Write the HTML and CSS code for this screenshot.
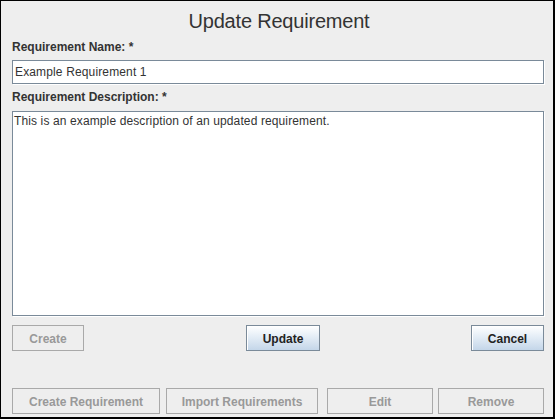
FILE: index.html
```html
<!DOCTYPE html>
<html>
<head>
<meta charset="utf-8">
<link rel="stylesheet" href="styles.css">
</head>
<body>
<div class="window">
  <div class="title">Update Requirement</div>
  <div class="label label-name">Requirement Name: *</div>
  <div class="field">Example Requirement 1</div>
  <div class="label label-desc">Requirement Description: *</div>
  <div class="area">This is an example description of an updated requirement.</div>
  <div class="row actions">
    <button class="btn disabled btn-create">Create</button>
    <button class="btn enabled btn-update">Update</button>
    <button class="btn enabled btn-cancel">Cancel</button>
  </div>
  <div class="row bottom">
    <button class="btn disabled b-create">Create Requirement</button>
    <button class="btn disabled b-import">Import Requirements</button>
    <button class="btn disabled b-edit">Edit</button>
    <button class="btn disabled b-remove">Remove</button>
  </div>
</div>
</body>
</html>
```
FILE: styles.css
```css
html, body {
  margin: 0;
  padding: 0;
  background: #eeeeee;
}
.window {
  width: 555px;
  height: 419px;
  box-sizing: border-box;
  border-top: 1px solid #000;
  border-left: 1px solid #000;
  border-right: 2px solid #000;
  border-bottom: 2px solid #000;
  background: #eeeeee;
  padding: 8px 9px 0 11px;
  font-family: "Liberation Sans", Arial, sans-serif;
  color: #333333;
  display: flex;
  flex-direction: column;
}
.title {
  font-size: 20px;
  line-height: 24px;
  text-align: center;
  letter-spacing: -0.2px;
  margin-left: 2px;
}
.label {
  font-size: 12px;
  font-weight: bold;
  line-height: 15px;
}
.label-name {
  margin-top: 7px;
}
.label-desc {
  margin-top: 6px;
}
.field {
  margin-top: 5px;
  height: 24px;
  box-sizing: border-box;
  border: 1px solid #7a8a99;
  box-shadow: 1px 1px 0 #ffffff;
  background: #ffffff;
  font-size: 12px;
  line-height: 16px;
  letter-spacing: 0.14px;
  padding: 3px 2px;
  color: #333333;
}
.area {
  margin-top: 6px;
  height: 205px;
  box-sizing: border-box;
  border: 1px solid #7a8a99;
  box-shadow: 1px 1px 0 #ffffff;
  background: #ffffff;
  font-size: 12px;
  line-height: 16px;
  letter-spacing: 0.12px;
  padding: 1px 1px;
  color: #333333;
}
.row {
  display: flex;
}
.actions {
  margin-top: 9px;
  justify-content: space-between;
}
.bottom {
  margin-top: 37px;
}
.btn {
  height: 26px;
  box-sizing: border-box;
  padding: 1px 0 0 0;
  margin: 0;
  font-family: "Liberation Sans", Arial, sans-serif;
  font-size: 12px;
  font-weight: bold;
  text-align: center;
  border-radius: 0;
}
.enabled {
  border: 1px solid #7a8a99;
  color: #222222;
  background: linear-gradient(#ffffff 0%, #e4edf6 45%, #c4d6e9 100%);
  box-shadow: inset 1px 1px 0 #ffffff;
}
.disabled {
  border: 1px solid #a9a9a9;
  color: #999999;
  background: #eeeeee;
}
.btn-create { width: 72px; }
.btn-update { width: 74px; margin-left: 11px; }
.btn-cancel { width: 73px; }
.b-create { width: 148px; }
.b-import { width: 152px; margin-left: 6px; }
.b-edit { width: 106px; margin-left: 9px; }
.b-remove { width: 106px; margin-left: 5px; }
```
